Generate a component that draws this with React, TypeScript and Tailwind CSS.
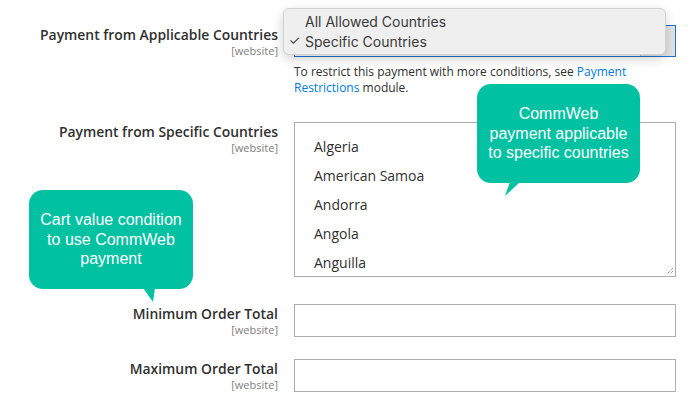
import React from 'react';

const countries = ['Algeria', 'American Samoa', 'Andorra', 'Angola', 'Anguilla'];

const Label: React.FC<{ title: string }> = ({ title }) => (
  <div className="w-[278px] shrink-0 text-right">
    <div className="text-[13.9px] leading-[19px] font-semibold text-[#303030]">{title}</div>
    <div className="text-[11px] leading-[13px] text-[#808080]">[website]</div>
  </div>
);

const Bubble: React.FC<{ className: string; tailLeft: string; tailPath: string; children: React.ReactNode }> = ({ className, tailLeft, tailPath, children }) => (
  <div className={`absolute ${className}`}>
    <div className="w-full h-full rounded-[14px] bg-[#00c1a1] flex items-center justify-center text-center text-white text-[16px] leading-[19.5px] font-['Liberation_Sans',Arial,sans-serif]">
      {children}
    </div>
    <svg className={`absolute top-[98px] ${tailLeft}`} width="16" height="16" viewBox="0 0 16 16">
      <path d={tailPath} fill="#00c1a1" />
    </svg>
  </div>
);

export default function App() {
  return (
    <div className="relative w-[690px] h-[402px] bg-white overflow-hidden font-['Open_Sans',sans-serif] text-[#303030]">
      <div className="flex flex-col pt-[25px]">
        {/* Applicable countries */}
        <div className="flex gap-4">
          <Label title="Payment from Applicable Countries" />
          <div className="w-[382px]">
            <div className="h-[32px] border border-[#1f73d1] flex justify-end">
              <div className="w-[35px] bg-[#e3e3e3] border-l border-[#bdbdbd]" />
            </div>
            <p className="mt-[7px] text-[12px] leading-[16px] text-[#303030]">
              To restrict this payment with more conditions, see <span className="text-[#007bdb]">Payment Restrictions</span> module.
            </p>
          </div>
        </div>

        {/* Specific countries */}
        <div className="flex gap-4 mt-[26px]">
          <Label title="Payment from Specific Countries" />
          <div className="relative w-[382px] h-[155px] border border-[#adadad] pt-[9px] pl-[19px]">
            {countries.map(c => (
              <div key={c} className="h-[29px] flex items-center text-[14px] text-[#303030]">{c}</div>
            ))}
            <svg className="absolute right-[1px] bottom-[1px]" width="9" height="9" viewBox="0 0 9 9">
              <path d="M8 2 L2 8 M8 5 L5 8" stroke="#777" strokeWidth="1" strokeDasharray="1 1" />
            </svg>
          </div>
        </div>

        {/* Minimum */}
        <div className="flex gap-4 mt-[27px]">
          <Label title="Minimum Order Total" />
          <div className="w-[382px] h-[33px] border border-[#adadad]" />
        </div>

        {/* Maximum */}
        <div className="flex gap-4 mt-[22px]">
          <Label title="Maximum Order Total" />
          <div className="w-[382px] h-[33px] border border-[#adadad]" />
        </div>
      </div>

      {/* Native select popup */}
      <div className="absolute left-[283px] top-[8px] w-[383px] h-[47px] rounded-[6px] bg-[#efefef] border border-[#d2d2d2] shadow-[0_4px_12px_rgba(0,0,0,0.18)] py-[2px] font-['Inter',sans-serif] text-[14px] text-[#3a3a3a]">
        <div className="h-[20px] flex items-center pl-[21px]">All Allowed Countries</div>
        <div className="h-[20px] flex items-center">
          <span className="w-[21px] text-center text-[13px]">✓</span>
          <span>Specific Countries</span>
        </div>
      </div>

      <Bubble className="left-[477px] top-[84px] w-[163px] h-[99px]" tailLeft="left-[28px]" tailPath="M5 0 L15 0 L0 14 Z">
        <span>CommWeb<br />payment applicable<br />to specific countries</span>
      </Bubble>

      <Bubble className="left-[29px] top-[190px] w-[164px] h-[99px]" tailLeft="left-[114px]" tailPath="M0 0 L12 0 L10 14 Z">
        <span>Cart value condition<br />to use CommWeb<br />payment</span>
      </Bubble>
    </div>
  );
}
